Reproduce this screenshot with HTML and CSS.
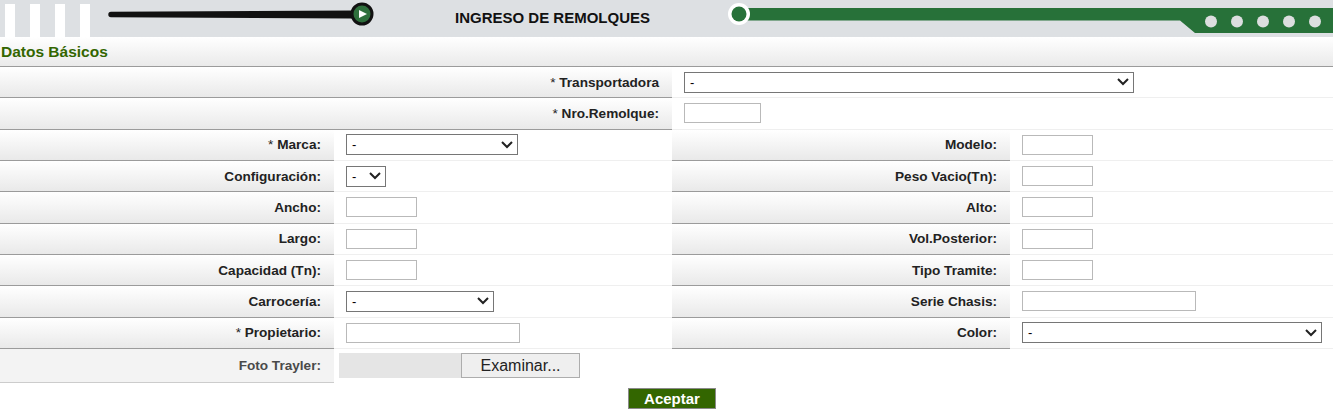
FILE: index.html
```html
<!DOCTYPE html>
<html lang="es">
<head>
<meta charset="utf-8">
<title>Ingreso de Remolques</title>
<link rel="stylesheet" href="styles.css">
</head>
<body>
<header class="banner">
  <div class="bars"><span></span><span></span><span></span><span></span></div>
  <svg class="slider" width="290" height="37" viewBox="0 0 290 37">
    <path d="M21 11.8 L262 10.5 L262 18.5 L21 17.2 A2.7 2.7 0 0 1 21 11.8 Z" fill="#111"/>
    <circle cx="272" cy="14" r="10" fill="#2e6f3c" stroke="#111" stroke-width="3"/>
    <path d="M269 10 L277 14 L269 18 Z" fill="#fff"/>
  </svg>
  <div class="title">INGRESO DE REMOLQUES</div>
  <svg class="track" width="613" height="37" viewBox="0 0 613 37">
    <path d="M25 8 H613 V33 H475 L460 20.5 H25 Z" fill="#277139"/>
    <circle cx="19" cy="14" r="11" fill="#fff"/>
    <circle cx="19" cy="14" r="7.5" fill="#277139"/>
    <circle cx="491" cy="21.5" r="6" fill="#dcdedf"/>
    <circle cx="517" cy="21.5" r="6" fill="#dcdedf"/>
    <circle cx="543" cy="21.5" r="6" fill="#dcdedf"/>
    <circle cx="569" cy="21.5" r="6" fill="#dcdedf"/>
    <circle cx="595" cy="21.5" r="6" fill="#dcdedf"/>
  </svg>
</header>

<div class="section-title">Datos Básicos</div>

<div class="form">
  <div class="lbl span2"><span class="req">* </span>Transportadora</div>
  <div class="val span2"><div class="sel w-transp"><span>-</span><svg width="12" height="8" viewBox="0 0 12 8"><path d="M1 1 L6 6 L11 1" fill="none" stroke="#222" stroke-width="2"/></svg></div></div>

  <div class="lbl span2"><span class="req">* </span>Nro.Remolque:</div>
  <div class="val span2"><input class="txt w-nro" type="text"></div>

  <div class="lbl"><span class="req">* </span>Marca:</div>
  <div class="val"><div class="sel w-marca"><span>-</span><svg width="12" height="8" viewBox="0 0 12 8"><path d="M1 1 L6 6 L11 1" fill="none" stroke="#222" stroke-width="2"/></svg></div></div>
  <div class="lbl">Modelo:</div>
  <div class="val"><input class="txt" type="text"></div>

  <div class="lbl">Configuración:</div>
  <div class="val"><div class="sel w-config"><span>-</span><svg width="12" height="8" viewBox="0 0 12 8"><path d="M1 1 L6 6 L11 1" fill="none" stroke="#222" stroke-width="2"/></svg></div></div>
  <div class="lbl">Peso Vacio(Tn):</div>
  <div class="val"><input class="txt" type="text"></div>

  <div class="lbl">Ancho:</div>
  <div class="val"><input class="txt" type="text"></div>
  <div class="lbl">Alto:</div>
  <div class="val"><input class="txt" type="text"></div>

  <div class="lbl">Largo:</div>
  <div class="val"><input class="txt" type="text"></div>
  <div class="lbl">Vol.Posterior:</div>
  <div class="val"><input class="txt" type="text"></div>

  <div class="lbl">Capacidad (Tn):</div>
  <div class="val"><input class="txt" type="text"></div>
  <div class="lbl">Tipo Tramite:</div>
  <div class="val"><input class="txt" type="text"></div>

  <div class="lbl">Carrocería:</div>
  <div class="val"><div class="sel w-carro"><span>-</span><svg width="12" height="8" viewBox="0 0 12 8"><path d="M1 1 L6 6 L11 1" fill="none" stroke="#222" stroke-width="2"/></svg></div></div>
  <div class="lbl">Serie Chasis:</div>
  <div class="val"><input class="txt w-long" type="text"></div>

  <div class="lbl"><span class="req">* </span>Propietario:</div>
  <div class="val"><input class="txt w-long" type="text"></div>
  <div class="lbl">Color:</div>
  <div class="val"><div class="sel w-color"><span>-</span><svg width="12" height="8" viewBox="0 0 12 8"><path d="M1 1 L6 6 L11 1" fill="none" stroke="#222" stroke-width="2"/></svg></div></div>

  <div class="lbl foto">Foto Trayler:</div>
  <div class="val foto-val">
    <div class="file"><span class="file-name"></span><span class="file-btn">Examinar...</span></div>
  </div>
</div>

<div class="actions"><button class="btn" type="button">Aceptar</button></div>
</body>
</html>
```
FILE: styles.css
```css
body {
  margin: 0;
  width: 1333px;
  font-family: "Liberation Sans", Arial, sans-serif;
  color: #222;
  background: #fff;
}

.banner {
  display: flex;
  height: 37px;
  background: #dde0e3;
}

.bars {
  display: flex;
  gap: 15px;
  margin-left: 5px;
  align-self: flex-end;
  width: 85px;
}

.bars span {
  width: 10px;
  height: 33px;
  background: #fff;
}

.slider {
  display: block;
  flex: none;
}

.title {
  width: 265px;
  padding-left: 75px;
  font-size: 15px;
  font-weight: bold;
  line-height: 35px;
  color: #111;
}

.track {
  display: block;
  flex: none;
}

.section-title {
  height: 29px;
  line-height: 29px;
  padding-left: 1px;
  border-bottom: 1px solid #9b9b9b;
  background: linear-gradient(#ffffff, #eaeaea);
  color: #336600;
  font-size: 15.5px;
  font-weight: bold;
}

.form {
  display: grid;
  grid-template-columns: 334px 338px 338px 323px;
  grid-template-rows: repeat(9, 31.333px) 34px;
}

.span2 {
  grid-column: span 2;
}

.lbl {
  display: flex;
  align-items: center;
  justify-content: flex-end;
  padding-right: 13px;
  border-bottom: 1px solid #9b9b9b;
  background: linear-gradient(#ffffff, #e9e9e9);
  font-size: 13.6px;
  font-weight: bold;
  color: #222;
}

.req {
  font-weight: normal;
  white-space: pre;
}

.val {
  display: flex;
  align-items: center;
  padding-left: 12px;
  border-bottom: 1px solid #efefef;
  background: #fff;
}

.txt {
  box-sizing: border-box;
  width: 71px;
  height: 20px;
  margin: 0;
  padding: 0 3px;
  border: 1px solid #b9b9b9;
  background: #fff;
  font-family: inherit;
  font-size: 13px;
}

.w-nro { width: 77px; }
.w-long { width: 174px; }

.sel {
  box-sizing: border-box;
  display: flex;
  align-items: center;
  justify-content: space-between;
  height: 21px;
  padding: 0 4px 0 5px;
  border: 1px solid #767676;
  background: #fff;
  font-size: 13px;
  color: #000;
}

.sel svg {
  display: block;
}

.w-transp { width: 450px; }
.w-marca { width: 172px; }
.w-config { width: 40px; }
.w-carro { width: 148px; }
.w-color { width: 300px; }

.lbl.foto {
  background: #f3f3f3;
  border-bottom-color: #cccccc;
  color: #4a4a4a;
}

.val.foto-val {
  padding-left: 5px;
  border-bottom: none;
}

.file {
  display: flex;
  height: 25px;
}

.file-name {
  width: 122px;
  background: #e5e5e5;
}

.file-btn {
  box-sizing: border-box;
  width: 119px;
  border: 1px solid #adadad;
  background: #efefef;
  font-size: 16px;
  line-height: 23px;
  text-align: center;
  color: #222;
}

.actions {
  display: flex;
  justify-content: center;
  padding-left: 11px;
  margin-top: 5px;
}

.btn {
  width: 88px;
  height: 21px;
  margin: 0;
  padding: 0;
  border: 1px solid #8a8a8a;
  background: #336600;
  color: #fff;
  font-family: inherit;
  font-size: 15px;
  font-weight: bold;
  line-height: 19px;
}
```
